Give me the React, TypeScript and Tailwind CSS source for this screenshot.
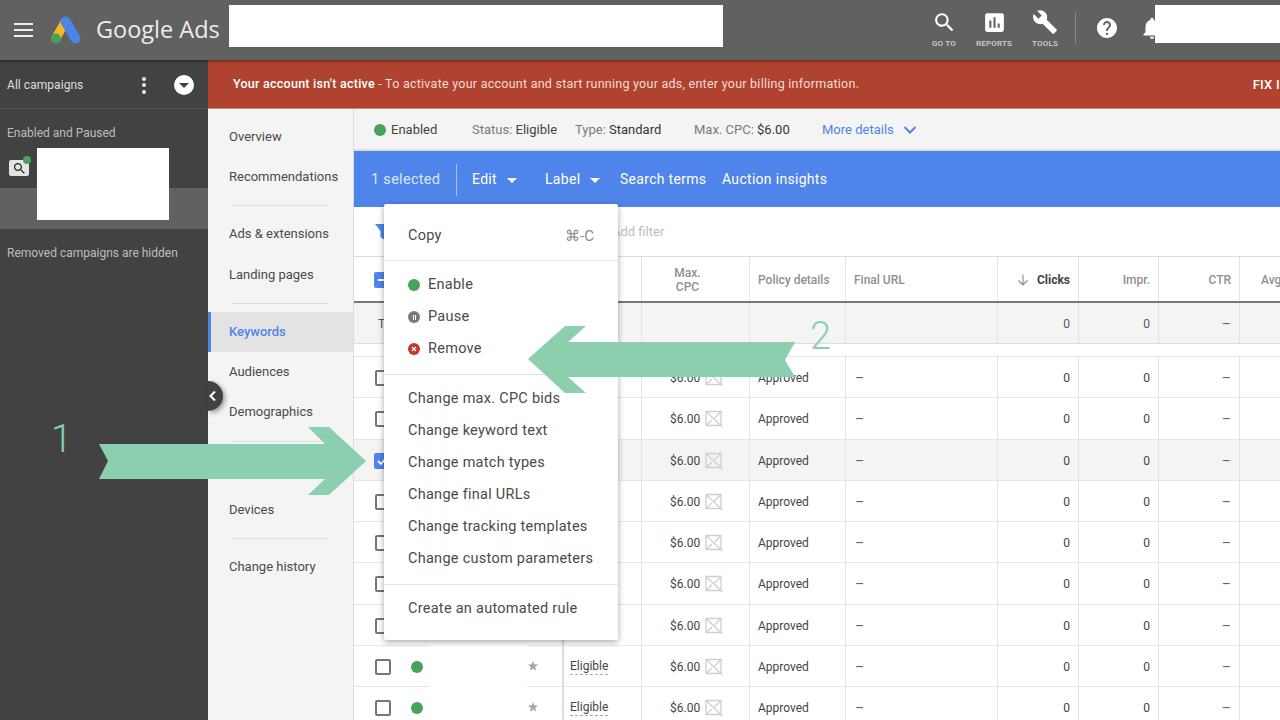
const font = { fontFamily: "Roboto, 'Liberation Sans', sans-serif" };

const P = {
  search: "M15.5 14h-.79l-.28-.27C15.41 12.59 16 11.11 16 9.5 16 5.91 13.09 3 9.5 3S3 5.91 3 9.5 5.91 16 9.5 16c1.61 0 3.09-.59 4.23-1.57l.27.28v.79l5 4.99L20.49 19l-4.99-5zm-6 0C7.01 14 5 11.99 5 9.5S7.01 5 9.5 5 14 7.01 14 9.5 11.99 14 9.5 14z",
  reports: "M19 3H5c-1.1 0-2 .9-2 2v14c0 1.1.9 2 2 2h14c1.1 0 2-.9 2-2V5c0-1.1-.9-2-2-2zM9 17H7v-7h2v7zm4 0h-2V7h2v10zm4 0h-2v-4h2v4z",
  tools: "M22.7 19l-9.1-9.1c.9-2.3.4-5-1.5-6.9-2-2-5-2.4-7.4-1.3L9 6 6 9 1.6 4.7C.4 7.1.9 10.1 2.9 12.1c1.9 1.9 4.6 2.4 6.9 1.5l9.1 9.1c.4.4 1 .4 1.4 0l2.3-2.3c.5-.4.5-1.1.1-1.4z",
  help: "M12 2C6.48 2 2 6.48 2 12s4.48 10 10 10 10-4.48 10-10S17.52 2 12 2zm1 17h-2v-2h2v2zm2.07-7.75l-.9.92C13.45 12.9 13 13.5 13 15h-2v-.5c0-1.1.45-2.1 1.17-2.83l1.24-1.26c.37-.36.59-.86.59-1.41 0-1.1-.9-2-2-2s-2 .9-2 2H8c0-2.21 1.79-4 4-4s4 1.79 4 4c0 .88-.36 1.68-.93 2.25z",
  bell: "M12 22c1.1 0 2-.9 2-2h-4c0 1.1.89 2 2 2zm6-6v-5c0-3.07-1.64-5.64-4.5-6.32V4c0-.83-.67-1.5-1.5-1.5s-1.5.67-1.5 1.5v.68C7.63 5.36 6 7.92 6 11v5l-2 2v1h16v-1l-2-2z",
  star: "M12 17.27L18.18 21l-1.64-7.03L22 9.24l-7.19-.61L12 2 9.19 8.63 2 9.24l5.46 4.73L5.82 21z",
};

function Icon({ d, className }: { d: string; className: string }) {
  return (
    <svg viewBox="0 0 24 24" className={className} fill="currentColor">
      <path d={d} />
    </svg>
  );
}

function Logo() {
  return (
    <svg width="32" height="28" viewBox="0 0 32 28" className="ml-[17px]">
      <line x1="15" y1="6" x2="6" y2="22" stroke="#f4b923" strokeWidth="9" strokeLinecap="round" />
      <line x1="15.5" y1="5.5" x2="25.5" y2="22.5" stroke="#4a86e8" strokeWidth="10" strokeLinecap="round" />
      <circle cx="6" cy="22.5" r="5" fill="#47a35a" />
    </svg>
  );
}

function TopAction({ d, label, box, w }: { d: string; label: string; box: string; w: string }) {
  return (
    <div className={`flex flex-col items-center ${w}`}>
      <div className="h-[28px] flex items-center justify-center">
        <Icon d={d} className={`${box} text-white`} />
      </div>
      <div className="text-[8px] font-medium leading-[10px] mt-[3px] text-[#d4d4d4] tracking-[0.2px]">{label}</div>
    </div>
  );
}

function Header() {
  return (
    <header className="h-[60px] bg-[#616161] flex items-center relative z-10 shadow-[0_1px_3px_rgba(0,0,0,0.5)]">
      <div className="ml-[14px] w-[19px] flex flex-col gap-[4px]">
        <div className="h-[2px] bg-[#eeeeee]" />
        <div className="h-[2px] bg-[#eeeeee]" />
        <div className="h-[2px] bg-[#eeeeee]" />
      </div>
      <Logo />
      <div className="ml-[14px] w-[125px] text-[23.5px] text-[#ececec] whitespace-nowrap leading-none" style={{ fontFamily: "'Open Sans', sans-serif" }}>
        Google Ads
      </div>
      <div className="ml-[8px] w-[494px] h-[42px] bg-white self-start mt-[5px]" />
      <div className="ml-[196px] flex items-start self-start mt-[8px]">
        <TopAction d={P.search} label="GO TO" box="w-[25px] h-[25px]" w="w-[50px]" />
        <TopAction d={P.reports} label="REPORTS" box="w-[25px] h-[25px]" w="w-[50px]" />
        <TopAction d={P.tools} label="TOOLS" box="w-[26px] h-[26px]" w="w-[52px]" />
        <div className="ml-[4px] mt-[4px] w-px h-[32px] bg-[#8a8a8a]" />
        <div className="ml-[19px] mt-[8px]"><Icon d={P.help} className="w-[24px] h-[24px] text-white" /></div>
        <div className="ml-[20px] mt-[7px]"><Icon d={P.bell} className="w-[26px] h-[26px] text-white" /></div>
      </div>
      <div className="absolute right-0 top-[5px] w-[125px] h-[38px] bg-white" />
    </header>
  );
}

function Sidebar() {
  return (
    <aside className="w-[208px] shrink-0 bg-[#424242] flex flex-col text-[12px]">
      <div className="h-[49px] pt-[2px] border-b border-[#525252] flex items-center pl-[7px] text-[#dedede] tracking-[0.05px]">
        <span className="w-[131px]">All campaigns</span>
        <div className="w-[12px] flex flex-col items-center gap-[2.5px]">
          <div className="w-[4px] h-[4px] rounded-full bg-[#e8e8e8]" />
          <div className="w-[4px] h-[4px] rounded-full bg-[#e8e8e8]" />
          <div className="w-[4px] h-[4px] rounded-full bg-[#e8e8e8]" />
        </div>
        <div className="ml-[24px] w-[20px] h-[20px] rounded-full bg-white flex items-center justify-center">
          <div className="w-0 h-0 border-x-[5px] border-x-transparent border-t-[5px] border-t-[#424242]" />
        </div>
      </div>
      <div className="pt-[17px] pl-[7px] text-[#bdbdbd] h-[79px] leading-[14px]">
        <div>Enabled and Paused</div>
        <div className="mt-[20px] flex items-start">
          <div className="relative ml-[2px] w-[20px] h-[16px] rounded-[2px] bg-[#e4e4e4] flex items-center justify-center">
            <Icon d={P.search} className="w-[15px] h-[15px] text-[#222222]" />
            <div className="absolute -right-[2px] -top-[4px] w-[8px] h-[8px] rounded-full bg-[#47a35a]" />
          </div>
          <div className="ml-[8px] -mt-[12px] w-[132px] h-[72px] bg-white relative z-10" />
        </div>
      </div>
      <div className="h-[41px] bg-[#616161]" />
      <div className="mt-[17px] pl-[7px] text-[#bdbdbd] leading-[14px]">Removed campaigns are hidden</div>
    </aside>
  );
}

function NavItem({ label, active }: { label: string; active?: boolean }) {
  return (
    <div className={`h-[40px] flex items-center text-[13px] ${active ? "bg-[#e3e3e3] border-l-[3px] border-[#4f84ea] pl-[18px] font-medium text-[#4f84ea]" : "pl-[21px] text-[#4a4a4a]"}`}>
      {label}
    </div>
  );
}

function NavRule() {
  return <div className="mx-[24px] my-[8px] h-px bg-[#dcdcdc]" />;
}

function Nav() {
  return (
    <nav className="w-[146px] shrink-0 bg-[#f4f4f4] pt-[8px] border-r border-[#dddddd]">
      <NavItem label="Overview" />
      <NavItem label="Recommendations" />
      <NavRule />
      <NavItem label="Ads & extensions" />
      <div className="h-px" />
      <NavItem label="Landing pages" />
      <NavRule />
      <NavItem label="Keywords" active />
      <NavItem label="Audiences" />
      <NavItem label="Demographics" />
      <div className="mx-[24px] my-[8.5px] h-px bg-[#dcdcdc]" />
      <div className="h-[40px]" />
      <NavItem label="Devices" />
      <NavRule />
      <NavItem label="Change history" />
    </nav>
  );
}

function InfoBar() {
  return (
    <div className="h-[42px] pt-[2px] bg-[#f4f4f4] border-b-2 border-[#dddddd] flex items-center text-[13px] text-[#7a7a7a] shrink-0 whitespace-nowrap">
      <div className="ml-[20px] w-[12px] h-[12px] rounded-full bg-[#47a35a]" />
      <span className="ml-[5px] w-[81px] text-[#444444]">Enabled</span>
      <span className="w-[103px]">Status: <span className="text-[#444444]">Eligible</span></span>
      <span className="w-[119px]">Type: <span className="text-[#333333]">Standard</span></span>
      <span className="w-[128px]">Max. CPC: <span className="text-[#333333]">$6.00</span></span>
      <span className="text-[#4f84ea]">More details</span>
      <svg width="14" height="10" viewBox="0 0 14 10" className="ml-[9px]"><path d="M1.5 2 7 7.5 12.5 2" fill="none" stroke="#4f84ea" strokeWidth="2" /></svg>
    </div>
  );
}

function Caret() {
  return <span className="inline-block ml-[10px] align-middle w-0 h-0 border-x-[5px] border-x-transparent border-t-[5px] border-t-white" />;
}

function BlueBar() {
  return (
    <div className="h-[56px] pt-[1px] bg-[#4f84ea] flex items-center text-white text-[14px] tracking-[0.3px] shrink-0 whitespace-nowrap">
      <span className="ml-[17px] w-[85px] text-[14.5px] text-[#dbe6fb]">1 selected</span>
      <div className="w-px h-[32px] bg-[#a5c2f4]" />
      <span className="ml-[15px] w-[73px]">Edit<Caret /></span>
      <span className="w-[75px]">Label<Caret /></span>
      <span className="w-[102px]">Search terms</span>
      <span>Auction insights</span>
    </div>
  );
}

function FilterBar() {
  return (
    <div className="h-[50px] bg-white flex items-center shrink-0 text-[13px] text-[#bdbdbd] border-b border-[#dddddd]">
      <svg width="18" height="18" viewBox="0 0 18 18" className="ml-[20px]"><path d="M1 1h15l-5.5 7v9l-4-3V8z" fill="#4f84ea" /></svg>
      <span className="ml-[220px]">Add filter</span>
    </div>
  );
}

const grid = "grid grid-cols-[210px_78px_108px_96px_152px_81px_80px_81px_1fr]";
const cell = "border-r border-[#e3e3e3] flex items-center pt-[2px]";

function Dash() {
  return <span className="text-[14px] text-[#666666] mt-px">–</span>;
}

function Head() {
  return (
    <div className={`${grid} h-[46px] bg-white border-b-2 border-[#777777] text-[12px] font-medium text-[#8f8f8f] leading-[14px] shrink-0`}>
      <div className={`${cell} border-r-0 pl-[20px]`}>
        <div className="w-[16px] h-[16px] rounded-[2px] bg-[#4f84ea] flex items-center justify-center"><div className="w-[9px] h-[2px] bg-white" /></div>
      </div>
      <div className={cell} />
      <div className={`${cell} justify-center pr-[16px] text-center`}>Max.<br />CPC</div>
      <div className={`${cell} pl-[8px]`}>Policy details</div>
      <div className={`${cell} pl-[8px]`}>Final URL</div>
      <div className={`${cell} justify-end pr-[8px]`}>
        <svg width="14" height="14" viewBox="0 0 14 14" className="mr-[7px]"><path d="M7 1.5v10M2.5 7.5 7 12l4.5-4.5" fill="none" stroke="#8a8a8a" strokeWidth="1.1" /></svg>
        <span className="text-[#444444] font-bold">Clicks</span>
      </div>
      <div className={`${cell} justify-end pr-[8px]`}>Impr.</div>
      <div className={`${cell} justify-end pr-[8px]`}>CTR</div>
      <div className="flex items-center pl-[21px] pt-[2px]">Avg</div>
    </div>
  );
}

function TotalRow() {
  return (
    <div className={`${grid} h-[41px] bg-[#f4f4f4] border-b border-[#dddddd] text-[12px] text-[#555555] shrink-0`}>
      <div className={`${cell} border-r-0 pl-[24px]`}>T</div>
      <div className={cell} />
      <div className={cell} />
      <div className={cell} />
      <div className={cell} />
      <div className={`${cell} justify-end pr-[8px]`}>0</div>
      <div className={`${cell} justify-end pr-[8px]`}>0</div>
      <div className={`${cell} justify-end pr-[8px]`}><Dash /></div>
      <div />
    </div>
  );
}

function NoImage() {
  return (
    <svg width="18" height="18" viewBox="0 0 18 18" className="ml-[5px] shrink-0" fill="none" stroke="#cfcfcf" strokeWidth="1.3">
      <path d="M1 1.5h15v14H1z" />
      <path d="M1 1.5 17.5 17M1 15.5 7 10M16 1.5 9.5 8" />
    </svg>
  );
}

function Row({ checked }: { checked?: boolean }) {
  return (
    <div className={`${grid} h-[41.25px] border-b border-[#e6e6e6] text-[12px] text-[#444444] shrink-0 ${checked ? "bg-[#f4f4f4]" : "bg-white"}`}>
      <div className="flex items-center pl-[21px] pt-[2px] border-r-2 border-[#dddddd]">
        {checked ? (
          <div className="-ml-px w-[16px] h-[16px] mr-px rounded-[2px] bg-[#4f84ea] flex items-center justify-center">
            <svg width="12" height="12" viewBox="0 0 12 12"><path d="M2 6l3 3 5-6" fill="none" stroke="#fff" strokeWidth="1.8" /></svg>
          </div>
        ) : (
          <div className="w-[16px] h-[16px] rounded-[2px] border-2 border-[#757575]" />
        )}
        <div className="ml-[20px] w-[12px] h-[12px] rounded-full bg-[#47a35a]" />
        <div className="ml-[7px] w-[97px] self-stretch -mt-[3px] -mb-px bg-white relative" />
        <Icon d={P.star} className="w-[12px] h-[12px] -mt-[2px] text-[#a8a8a8]" />
      </div>
      <div className={`${cell} pl-[6px]`}>
        <span className="border-b border-dashed border-[#aaaaaa] leading-[15px]">Eligible</span>
      </div>
      <div className={`${cell} pl-[28px]`}>
        <span>$6.00</span>
        <NoImage />
      </div>
      <div className={`${cell} pl-[8px]`}>Approved</div>
      <div className={`${cell} pl-[9px]`}><Dash /></div>
      <div className={`${cell} justify-end pr-[8px]`}>0</div>
      <div className={`${cell} justify-end pr-[8px]`}>0</div>
      <div className={`${cell} justify-end pr-[8px]`}><Dash /></div>
      <div />
    </div>
  );
}

function MenuItem({ label, icon }: { label: string; icon?: React.ReactNode }) {
  return (
    <div className="h-[32px] flex items-center pl-[24px] text-[#4a4a4a] whitespace-nowrap">
      {icon && <span className="w-[20px] flex items-center">{icon}</span>}
      {label}
    </div>
  );
}

function MenuRule() {
  return <div className="h-px bg-[#e2e2e2] my-[8.5px]" />;
}

function Menu() {
  return (
    <div className="absolute left-[384px] top-[204px] w-[234px] h-[436px] z-20 bg-white rounded-[2px] shadow-[0_2px_6px_rgba(0,0,0,0.35)] text-[14.5px] tracking-[0.27px] pt-[16px]">
      <div className="h-[32px] flex items-center justify-between px-[24px] text-[#4a4a4a]">
        <span>Copy</span>
        <span className="text-[#8a8a8a] text-[15px] tracking-normal">⌘-C</span>
      </div>
      <div className="h-px bg-[#e2e2e2] mt-[7.5px] mb-[8.5px]" />
      <MenuItem label="Enable" icon={<span className="w-[12px] h-[12px] rounded-full bg-[#47a35a]" />} />
      <MenuItem
        label="Pause"
        icon={
          <span className="w-[12px] h-[12px] rounded-full bg-[#7a7a7a] flex items-center justify-center gap-px">
            <span className="w-px h-[5px] bg-white" />
            <span className="w-px h-[5px] bg-white" />
          </span>
        }
      />
      <MenuItem
        label="Remove"
        icon={
          <span className="w-[12px] h-[12px] rounded-full bg-[#c0392b] flex items-center justify-center">
            <svg width="6" height="6" viewBox="0 0 6 6"><path d="M1 1l4 4M5 1 1 5" stroke="#fff" strokeWidth="1.2" /></svg>
          </span>
        }
      />
      <MenuRule />
      <MenuItem label="Change max. CPC bids" />
      <MenuItem label="Change keyword text" />
      <MenuItem label="Change match types" />
      <MenuItem label="Change final URLs" />
      <MenuItem label="Change tracking templates" />
      <MenuItem label="Change custom parameters" />
      <MenuRule />
      <MenuItem label="Create an automated rule" />
    </div>
  );
}

function Arrows() {
  return (
    <svg className="absolute left-0 top-0 z-30 pointer-events-none" width="1280" height="720" viewBox="0 0 1280 720">
      <polygon points="99,444 325,444 308,427 329,427 366,461 329,495 308,495 325,479 99,479 108,461" fill="#8bcfae" />
      <polygon points="528,359 565,326 586,326 568,342 795,342 785,360 795,377 568,377 586,393 565,393" fill="#8bcfae" />
    </svg>
  );
}

export default function App() {
  return (
    <div className="relative w-[1280px] h-[720px] overflow-hidden flex flex-col bg-white" style={font}>
      <Header />
      <div className="flex flex-1 min-h-0">
        <Sidebar />
        <div className="flex-1 min-w-0 flex flex-col">
          <div className="h-[49px] pt-[1px] shrink-0 bg-[#b04230] border-b border-[#d08a7e] flex items-center justify-between pl-[25px] text-[12.5px] text-[#f3dcd7] tracking-[0.25px] whitespace-nowrap overflow-hidden">
            <span><span className="font-medium text-white">Your account isn't active</span> - To activate your account and start running your ads, enter your billing information.</span>
            <span className="font-medium text-[13px] text-white">FIX I</span>
          </div>
          <div className="flex flex-1 min-h-0">
            <Nav />
            <main className="flex-1 min-w-0 flex flex-col overflow-hidden">
              <InfoBar />
              <BlueBar />
              <FilterBar />
              <Head />
              <TotalRow />
              <div className="h-[13px] shrink-0 border-b border-[#e6e6e6]" />
              <Row />
              <Row />
              <Row checked />
              <Row />
              <Row />
              <Row />
              <Row />
              <Row />
              <Row />
            </main>
          </div>
        </div>
      </div>
      <Menu />
      <Arrows />
      <div className="absolute left-[208px] top-[381px] z-10 w-[15px] h-[30px] rounded-r-full bg-[#424242] shadow-[2px_2px_5px_rgba(0,0,0,0.4)] flex items-center">
        <svg width="10" height="12" viewBox="0 0 10 12"><path d="M7 1.5 2.5 6 7 10.5" fill="none" stroke="#fff" strokeWidth="2" /></svg>
      </div>
      <div className="absolute left-[51px] top-[414px] z-30 text-[38px] leading-[50px] font-light text-[#8bcfae]">1</div>
      <div className="absolute left-[810px] top-[311px] z-30 text-[38px] leading-[50px] font-light text-[#8bcfae]">2</div>
    </div>
  );
}
